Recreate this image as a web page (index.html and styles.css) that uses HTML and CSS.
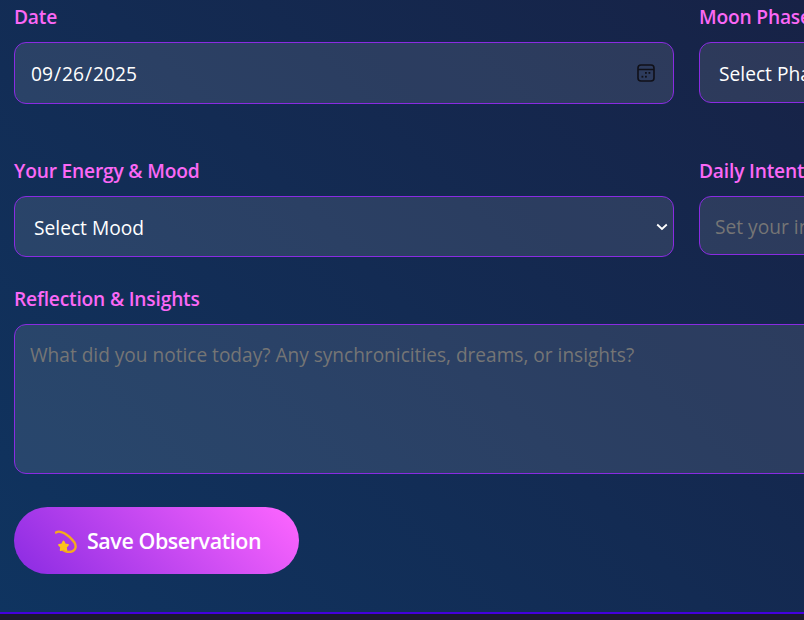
FILE: index.html
```html
<!DOCTYPE html>
<html lang="en">

<head>
    <meta charset="UTF-8">
    <meta name="viewport" content="width=device-width, initial-scale=1.0">
    <title>Moon Journal</title>
    <link rel="stylesheet" href="styles.css">
</head>

<body>
    <main class="journal">
        <form class="form-grid">
            <div class="field field-tall">
                <label for="date">Date</label>
                <input type="date" id="date" value="2025-09-26">
            </div>
            <div class="field field-tall">
                <label for="phase">Moon Phase</label>
                <select id="phase">
                    <option>Select Phase</option>
                </select>
            </div>
            <div class="field">
                <label for="mood">Your Energy &amp; Mood</label>
                <select id="mood">
                    <option>Select Mood</option>
                </select>
            </div>
            <div class="field">
                <label for="intention">Daily Intention</label>
                <input type="text" id="intention" placeholder="Set your intention for today">
            </div>
            <div class="field field-wide">
                <label for="notes">Reflection &amp; Insights</label>
                <textarea id="notes" placeholder="What did you notice today? Any synchronicities, dreams, or insights?"></textarea>
            </div>
        </form>
        <button type="button" class="save-btn">
            <!-- dizzy star emoji -->
            <svg class="save-icon" viewBox="0 0 24 24" width="24" height="24" aria-hidden="true">
                <path d="M1 3.500C5 .8 13 5 19.500 13.500c3 5.500-.5 9.500-5.500 9.500-2 0-4-.7-6-2" fill="none" stroke="#f4ab1d" stroke-width="2.400" stroke-linecap="round"/>
                <path d="M8.500 12.500l1.500 2.800 3 .6-2.100 2.200.4 3-2.800-1.300-2.800 1.300.4-3L4 15.900l3-.6z" fill="#fcc21b" stroke="#fcc21b" stroke-width="1.800" stroke-linejoin="round"/>
            </svg>
            Save Observation
        </button>
    </main>
    <div class="page-end"></div>
</body>

</html>
```

FILE: styles.css
```css
html,
body {
    margin: 0;
    height: 620px;
    overflow: hidden;
}

body {
    font-family: "Open Sans", "Noto Sans", sans-serif;
    background: #1a1a2e;
    color: #fff;
}

.journal {
    box-sizing: border-box;
    width: 804px;
    height: 612px;
    padding: 4px 0 0 14px;
    background: linear-gradient(45deg, #0f3460 0%, #172246 100%);
}

.form-grid {
    display: grid;
    grid-template-columns: 660px 660px;
    column-gap: 25px;
    row-gap: 29px;
    align-items: start;
}

.field-tall {
    margin-bottom: 25px;
}

.field-wide {
    grid-column: span 2;
}

.field label {
    display: block;
    margin-bottom: 13px;
    font-size: 19.200px;
    font-weight: 600;
    letter-spacing: -0.190px;
    line-height: 25px;
    color: #fb68f6;
}

.field input,
.field select,
.field textarea {
    box-sizing: border-box;
    display: block;
    width: 100%;
    padding: 16px 15px 14px;
    border: 1px solid #8a2be2;
    border-radius: 12px;
    background-color: rgba(255, 255, 255, 0.1);
    color: #fff;
    font-family: inherit;
    font-size: 19.200px;
}

.field input {
    height: 59px;
}

.field input[type="date"] {
    height: 62px;
    padding: 15px;
}

.field input[type="date"]::-webkit-calendar-picker-indicator {
    width: 20px;
    height: 20px;
    margin-right: 2px;
    padding: 0;
    background: url("data:image/svg+xml,%3Csvg xmlns='http://www.w3.org/2000/svg' viewBox='0 0 20 20'%3E%3Crect x='2' y='2' width='16' height='16' rx='3' fill='none' stroke='%23101018' stroke-width='1.6'/%3E%3Cpath d='M2 6.500h16' stroke='%23101018' stroke-width='1.600'/%3E%3Cg fill='%23101018'%3E%3Crect x='9' y='9' width='1.800' height='1.800'/%3E%3Crect x='12.500' y='9' width='1.800' height='1.800'/%3E%3Crect x='5.500' y='12.800' width='1.800' height='1.800'/%3E%3Crect x='9' y='12.800' width='1.800' height='1.800'/%3E%3C/g%3E%3C/svg%3E") center / contain no-repeat;
}

.field select {
    height: 61px;
    padding-left: 19px;
    appearance: none;
    background-image: url("data:image/svg+xml,%3Csvg xmlns='http://www.w3.org/2000/svg' viewBox='0 0 12 8'%3E%3Cpath d='M1.200 1.500L6 6l4.800-4.500' fill='none' stroke='%23fff' stroke-width='1.800'/%3E%3C/svg%3E");
    background-repeat: no-repeat;
    background-position: right 5px center;
    background-size: 12px 8px;
}

.field textarea {
    height: 150px;
    padding-top: 17px;
    font-size: 19.080px;
    resize: none;
}

.save-btn {
    display: flex;
    align-items: center;
    gap: 8px;
    height: 67px;
    margin-top: 33px;
    padding: 0 38px 0 41px;
    border: none;
    border-radius: 34px;
    background: linear-gradient(45deg, #8a2be2, #ff66ff);
    color: #fff;
    font-family: inherit;
    font-size: 21.400px;
    font-weight: 600;
    letter-spacing: -0.400px;
}

.page-end {
    height: 8px;
    border-top: 2px solid #4400dd;
    box-sizing: border-box;
}
```
